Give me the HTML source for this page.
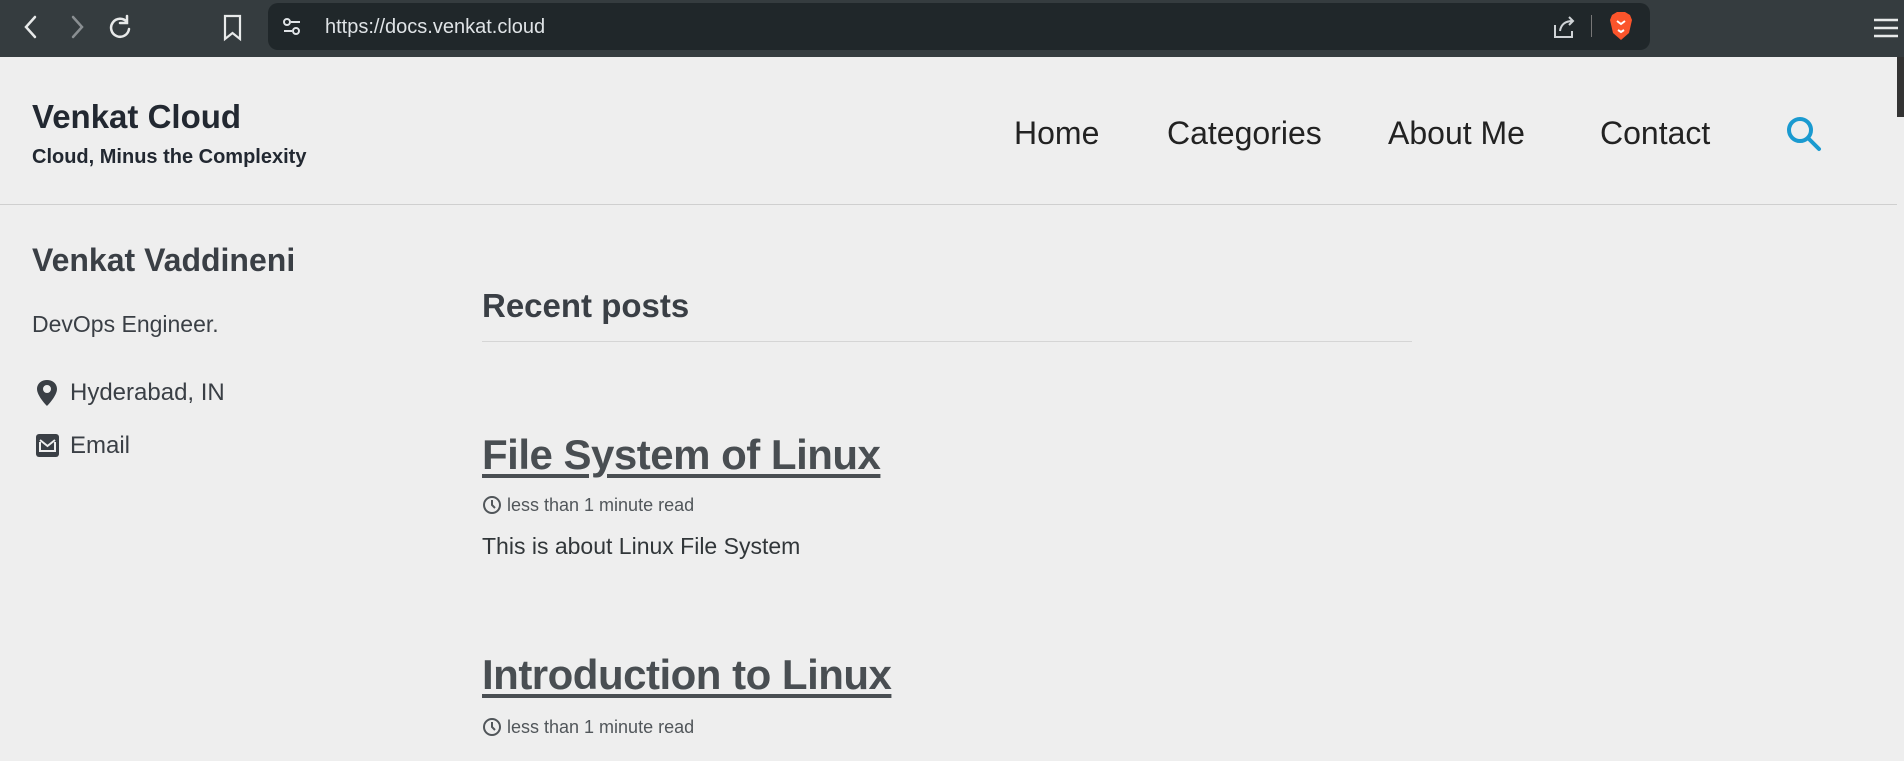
<!DOCTYPE html>
<html><head><meta charset="utf-8"><style>
*{margin:0;padding:0;box-sizing:border-box}
body{width:1904px;height:761px;overflow:hidden;background:#eeeeee;font-family:"Liberation Sans",sans-serif;color:#313639;position:relative}
.tb{position:absolute;left:0;top:0;width:1904px;height:57px;background:#353c3f}
.url{position:absolute;left:268px;top:3px;width:1382px;height:47px;background:#20272a;border-radius:10px}
.url span{position:absolute;left:57px;top:13px;color:#dfe3e6;font-size:20px}
.a{position:absolute;white-space:nowrap}
.nav{font-size:32px;color:#222;top:115px}
.t{font-weight:bold;text-decoration:underline;text-decoration-thickness:4px;text-underline-offset:5px;color:#494e52;font-size:42px;letter-spacing:-0.5px}
.m{font-size:18px;color:#51565a}
</style></head><body>
<div class="tb">
<svg style="position:absolute;left:20px;top:14px" width="140" height="28" fill="none" stroke-width="2.5" stroke-linecap="round"><path d="M15 3 L6 13 L15 23" stroke="#e8eaea"/><path d="M53 3 L62 13 L53 23" stroke="#8a8f92"/><path d="M107 8 A9 9 0 1 0 109 15 M107 2 V9 H100" stroke="#e8eaea"/></svg>
<svg style="position:absolute;left:222px;top:14px" width="22" height="28" fill="none" stroke="#e8eaea" stroke-width="2.2"><path d="M3 2 H18 V25 L10.5 19 L3 25 Z"/></svg>
<div class="url"><svg style="position:absolute;left:14px;top:14px" width="20" height="20" fill="none" stroke="#dfe3e6" stroke-width="2"><circle cx="5" cy="5" r="3"/><path d="M9 5 H18"/><circle cx="14" cy="14" r="3"/><path d="M2 14 H10"/></svg><span>https://docs.venkat.cloud</span>
<svg style="position:absolute;left:1284px;top:12px" width="26" height="24" fill="none" stroke="#cfd3d6" stroke-width="2"><path d="M3 10 V22 H20 V16 M8 16 C9 9 14 6 21 6 M17 2 L21 6 L17 10"/></svg>
<div style="position:absolute;left:1323px;top:12px;width:1px;height:22px;background:#777"></div>
<svg style="position:absolute;left:1340px;top:8px" width="26" height="30"><path d="M4 4 L9 1 H17 L22 4 L24 9 L21 22 L13 29 L5 22 L2 9 Z" fill="#fb542b"/><path d="M9 10 L13 13 L17 10 M10 19 L13 21 L16 19" stroke="#fff" stroke-width="2" fill="none"/></svg>
</div>
<svg style="position:absolute;left:1874px;top:18px" width="24" height="20" stroke="#e8eaea" stroke-width="2.5"><path d="M0 2H24M0 10H24M0 18H24"/></svg>
</div>
<div style="position:absolute;right:0;top:57px;width:7px;height:60px;background:#333"></div>
<div class="a" style="left:32px;top:98px;font-size:33px;font-weight:bold;color:#222831">Venkat Cloud</div>
<div class="a" style="left:32px;top:146px;font-size:20px;font-weight:bold;color:#222831">Cloud, Minus the Complexity</div>
<div class="a nav" style="left:1014px">Home</div>
<div class="a nav" style="left:1167px">Categories</div>
<div class="a nav" style="left:1388px">About Me</div>
<div class="a nav" style="left:1600px">Contact</div>
<svg style="position:absolute;left:1785px;top:115px" width="38" height="38" fill="none" stroke="#1a9ad0" stroke-width="4" stroke-linecap="round"><circle cx="15" cy="15" r="11"/><path d="M23 23 L34 34"/></svg>
<div style="position:absolute;left:0;top:204px;width:1897px;height:1px;background:#cfcfcf"></div>
<div class="a" style="left:32px;top:242px;font-size:32px;font-weight:bold;color:#3a3f45">Venkat Vaddineni</div>
<div class="a" style="left:32px;top:311px;font-size:23px;color:#3a3f45">DevOps Engineer.</div>
<svg style="position:absolute;left:36px;top:379px" width="22" height="28" fill="#3a3f45"><path d="M11 1 C5 1 1 5 1 10 C1 17 11 27 11 27 C11 27 21 17 21 10 C21 5 17 1 11 1 Z M11 6 A4 4 0 1 1 11 14 A4 4 0 1 1 11 6 Z" fill-rule="evenodd"/></svg>
<div class="a" style="left:70px;top:379px;font-size:24px;color:#3a3f45">Hyderabad, IN</div>
<svg style="position:absolute;left:36px;top:434px" width="24" height="24"><rect x="0" y="0" width="23" height="23" rx="3" fill="#3a3f45"/><path d="M4 6 L11.5 12 L19 6 M4 8 V17 H19 V8" stroke="#eee" stroke-width="2" fill="none"/></svg>
<div class="a" style="left:70px;top:432px;font-size:24px;color:#3a3f45">Email</div>
<div class="a" style="left:482px;top:287px;font-size:33px;font-weight:bold;color:#3a3f45">Recent posts</div>
<div style="position:absolute;left:482px;top:341px;width:930px;height:1px;background:#d5d5d5"></div>
<div class="a t" style="left:482px;top:431px">File System of Linux</div>
<svg style="position:absolute;left:482px;top:495px" width="20" height="20" fill="none" stroke="#51565a" stroke-width="2"><circle cx="10" cy="10" r="8"/><path d="M10 5 V10 L13 13"/></svg>
<div class="a m" style="left:507px;top:495px">less than 1 minute read</div>
<div class="a" style="left:482px;top:533px;font-size:23px;color:#313639">This is about Linux File System</div>
<div class="a t" style="left:482px;top:651px">Introduction to Linux</div>
<svg style="position:absolute;left:482px;top:717px" width="20" height="20" fill="none" stroke="#51565a" stroke-width="2"><circle cx="10" cy="10" r="8"/><path d="M10 5 V10 L13 13"/></svg>
<div class="a m" style="left:507px;top:717px">less than 1 minute read</div>
</body></html>
